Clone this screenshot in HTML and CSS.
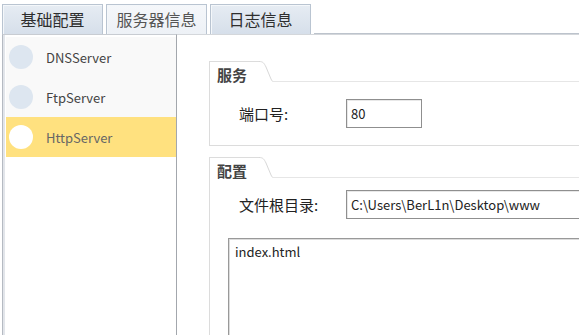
FILE: index.html
```html
<!DOCTYPE html>
<html lang="zh-CN">
<head>
<meta charset="utf-8">
<link rel="stylesheet" href="styles.css">
</head>
<body>
<div class="window">
  <div class="tabbar">
    <div class="tab">基础配置</div>
    <div class="tab tab-active">服务器信息</div>
    <div class="tab">日志信息</div>
    <div class="tab-rest"></div>
  </div>
  <div class="main">
    <div class="list">
      <div class="item"><span class="dot"></span><span class="name">DNSServer</span></div>
      <div class="item"><span class="dot"></span><span class="name">FtpServer</span></div>
      <div class="item item-active"><span class="dot"></span><span class="name">HttpServer</span></div>
    </div>
    <div class="pane">
      <div class="group group-service">
        <div class="group-head">
          <div class="group-title">服务</div>
          <svg class="slant" width="14" height="21" viewBox="0 0 14 21"><path d="M0 0.5 C4 0.5 5 2 7 6 L12 18 C13 20 13.5 20.5 14 20.5" fill="none" stroke="#d8d8d8" stroke-width="1"/></svg>
          <div class="group-line"></div>
        </div>
        <div class="group-body">
          <div class="field">
            <span class="label">端口号:</span>
            <div class="input input-port">80</div>
          </div>
        </div>
      </div>
      <div class="group group-config">
        <div class="group-head">
          <div class="group-title">配置</div>
          <svg class="slant" width="14" height="21" viewBox="0 0 14 21"><path d="M0 0.5 C4 0.5 5 2 7 6 L12 18 C13 20 13.5 20.5 14 20.5" fill="none" stroke="#d8d8d8" stroke-width="1"/></svg>
          <div class="group-line"></div>
        </div>
        <div class="group-body body-config">
          <div class="field">
            <span class="label">文件根目录:</span>
            <div class="input input-path">C:\Users\BerL1n\Desktop\www</div>
          </div>
          <div class="textarea">index.html</div>
        </div>
      </div>
    </div>
  </div>
</div>
</body>
</html>
```
FILE: styles.css
```css
html, body {
  margin: 0;
  padding: 0;
  background: #ffffff;
  overflow: hidden;
}
body {
  width: 579px;
  height: 335px;
  font-family: "Noto Sans CJK SC", "Noto Sans", sans-serif;
  color: #333;
}
.window {
  height: 335px;
  display: flex;
  flex-direction: column;
  overflow: hidden;
}
.tabbar {
  display: flex;
  align-items: flex-end;
  padding: 3px 0 0 2px;
  gap: 3px;
  height: 31px;
}
.tab {
  width: 99px;
  height: 29px;
  border: 1px solid #b9c4d1;
  border-bottom: none;
  background: linear-gradient(#e6ecf3, #d6dfea);
  box-shadow: inset 1px 1px 0 #f4f7fa;
  font-size: 16px;
  line-height: 29px;
  text-align: center;
  color: #2e2e2e;
}
.tab-active {
  background: linear-gradient(#f5f7fa, #edf1f6);
  color: #555;
}
.tab-rest {
  flex: 1;
  align-self: flex-end;
  border-bottom: 1px solid #bcc3cc;
  height: 0;
}
.main {
  flex: 1;
  min-height: 0;
  display: flex;
  overflow: hidden;
}
.list {
  width: 170px;
  margin-left: 2px;
  border-left: 1px solid #b5bac2;
  box-shadow: inset 2px 0 0 #e2e5ea;
  border-right: 1px solid #a3a7ad;
  border-top: 1px solid #c8ccd2;
  padding: 2px 0 0 3px;
  background: #fff;
}
.item {
  height: 40px;
  display: flex;
  align-items: center;
  background: #f9f9f9;
}
.item-active {
  background: #ffe17f;
}
.dot {
  width: 24px;
  height: 24px;
  border-radius: 50%;
  background: #dde6f0;
  margin-left: 3px;
}
.item-active .dot {
  background: #ffffff;
}
.name {
  margin-left: 13px;
  font-size: 13px;
  color: #444;
}
.item-active .name {
  color: #666;
}
.pane {
  flex: 1;
  padding: 26px 0 0 32px;
  border-top: 1px solid #d4d7db;
  overflow: hidden;
}
.group {
  margin-right: -40px;
  border-left: 1px solid #dcdcdc;
  border-bottom: 1px solid #dcdcdc;
}
.group-head {
  display: flex;
  height: 21px;
}
.group-title {
  width: 42px;
  border-top: 1px solid #dcdcdc;
  padding-left: 7px;
  font-size: 15px;
  font-weight: bold;
  line-height: 26px;
  color: #444;
}
.slant {
  display: block;
  flex: none;
}
.group-line {
  flex: 1;
  border-bottom: 1px solid #e6e6e6;
}
.group-body {
  padding: 17px 0 17px 29px;
}
.field {
  display: flex;
  align-items: center;
}
.label {
  width: 107px;
  font-size: 15px;
  color: #222;
}
.input {
  box-sizing: border-box;
  height: 29px;
  border: 1px solid #8f8f8f;
  box-shadow: inset 1px 1px 0 #e8e8e8;
  padding-left: 4px;
  font-size: 13px;
  line-height: 27px;
  color: #222;
}
.input-port {
  width: 76px;
}
.input-path {
  width: 260px;
  height: 29px;
}
.group-config {
  margin-top: 11px;
  border-bottom: none;
}
.body-config {
  padding: 12px 0 0 29px;
}
.textarea {
  margin: 19px 0 0 -11px;
  height: 100px;
  border: 1px solid #999;
  border-bottom: none;
  box-shadow: inset 1px 1px 0 #dcdcdc;
  padding: 3px 6px;
  font-size: 13px;
  color: #222;
}
```
